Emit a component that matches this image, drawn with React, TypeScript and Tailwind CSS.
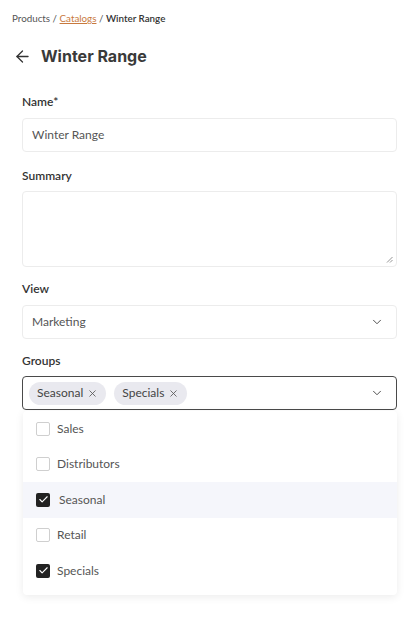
import { ArrowLeft, ChevronDown, X, Check } from 'lucide-react';

const groups = [
  { name: 'Sales', checked: false },
  { name: 'Distributors', checked: false },
  { name: 'Seasonal', checked: true, active: true },
  { name: 'Retail', checked: false },
  { name: 'Specials', checked: true },
];

function Label({ children }: { children: React.ReactNode }) {
  return <div className="text-[12px] leading-4 font-semibold text-[#333]">{children}</div>;
}

function Chip({ label }: { label: string }) {
  return (
    <span className="flex h-[23px] items-center gap-1 rounded-full bg-[#e9e9ef] pl-2 pr-2 text-[12px] text-[#444]">
      {label}
      <X size={11} strokeWidth={1.8} className="text-[#555]" />
    </span>
  );
}

export default function App() {
  return (
    <div className="min-h-[620px] w-[420px] bg-white" style={{ fontFamily: 'Lato, "Noto Sans", sans-serif' }}>
      <div className="px-3 pt-[11px] text-[9.8px] leading-[14px] text-[#555]">
        Products / <span className="text-[#c8793d] underline">Catalogs</span> /{' '}
        <span className="font-semibold text-[#333]">Winter Range</span>
      </div>

      <div className="mt-[19px] flex h-6 items-center gap-[9px] pl-[13px]">
        <ArrowLeft size={19} strokeWidth={1.6} className="text-[#333]" />
        <h1 className="text-[16px] font-bold text-[#3a3a3a]" style={{ fontFamily: 'Inter, sans-serif' }}>
          Winter Range
        </h1>
      </div>

      <div className="ml-[22px] mr-[23px] mt-[26px]">
        <Label>Name*</Label>
        <div className="mt-2 flex h-[34px] items-center rounded border border-[#ececec] px-[9px] text-[12px] text-[#555]">
          Winter Range
        </div>

        <div className="mt-4">
          <Label>Summary</Label>
        </div>
        <div className="relative mt-[7px] h-[76px] rounded border border-[#ececec]">
          <svg className="absolute bottom-[3px] right-[3px]" width="7" height="7" viewBox="0 0 7 7">
            <path d="M6.5 1 L1 6.5 M6.5 4 L4 6.5" stroke="#888" strokeWidth="0.9" />
          </svg>
        </div>

        <div className="mt-[14px]">
          <Label>View</Label>
        </div>
        <div className="mt-2 flex h-[34px] items-center justify-between rounded border border-[#ececec] pl-[9px] pr-[12px] text-[12px] text-[#555]">
          Marketing
          <ChevronDown size={14} strokeWidth={1.6} className="text-[#444]" />
        </div>

        <div className="mt-[14px]">
          <Label>Groups</Label>
        </div>
        <div className="mt-[7px] flex h-[34px] items-center justify-between rounded border border-[#4a4a4a] pl-[6px] pr-[12px]">
          <div className="flex items-center gap-2">
            <Chip label="Seasonal" />
            <Chip label="Specials" />
          </div>
          <ChevronDown size={14} strokeWidth={1.6} className="text-[#444]" />
        </div>

        <div className="mt-[1px] ml-px rounded-sm bg-white pb-[6px] shadow-[0_2px_8px_rgba(0,0,0,0.08)]">
          {groups.map((g) => (
            <div
              key={g.name}
              className={
                'flex h-[35.5px] items-center gap-[7px] pl-[13px] text-[12px] text-[#555] ' +
                (g.active ? 'bg-[#f5f6fb]' : '')
              }
            >
              {g.checked ? (
                <span className="flex h-[14px] w-[14px] items-center justify-center rounded-[2px] bg-[#222]">
                  <Check size={11} strokeWidth={2.4} className="text-white" />
                </span>
              ) : (
                <span className="h-[14px] w-[14px] rounded-[2px] border border-[#cfcfcf] bg-white" />
              )}
              <span className={g.active ? 'ml-[2px]' : ''}>{g.name}</span>
            </div>
          ))}
        </div>
      </div>
    </div>
  );
}
